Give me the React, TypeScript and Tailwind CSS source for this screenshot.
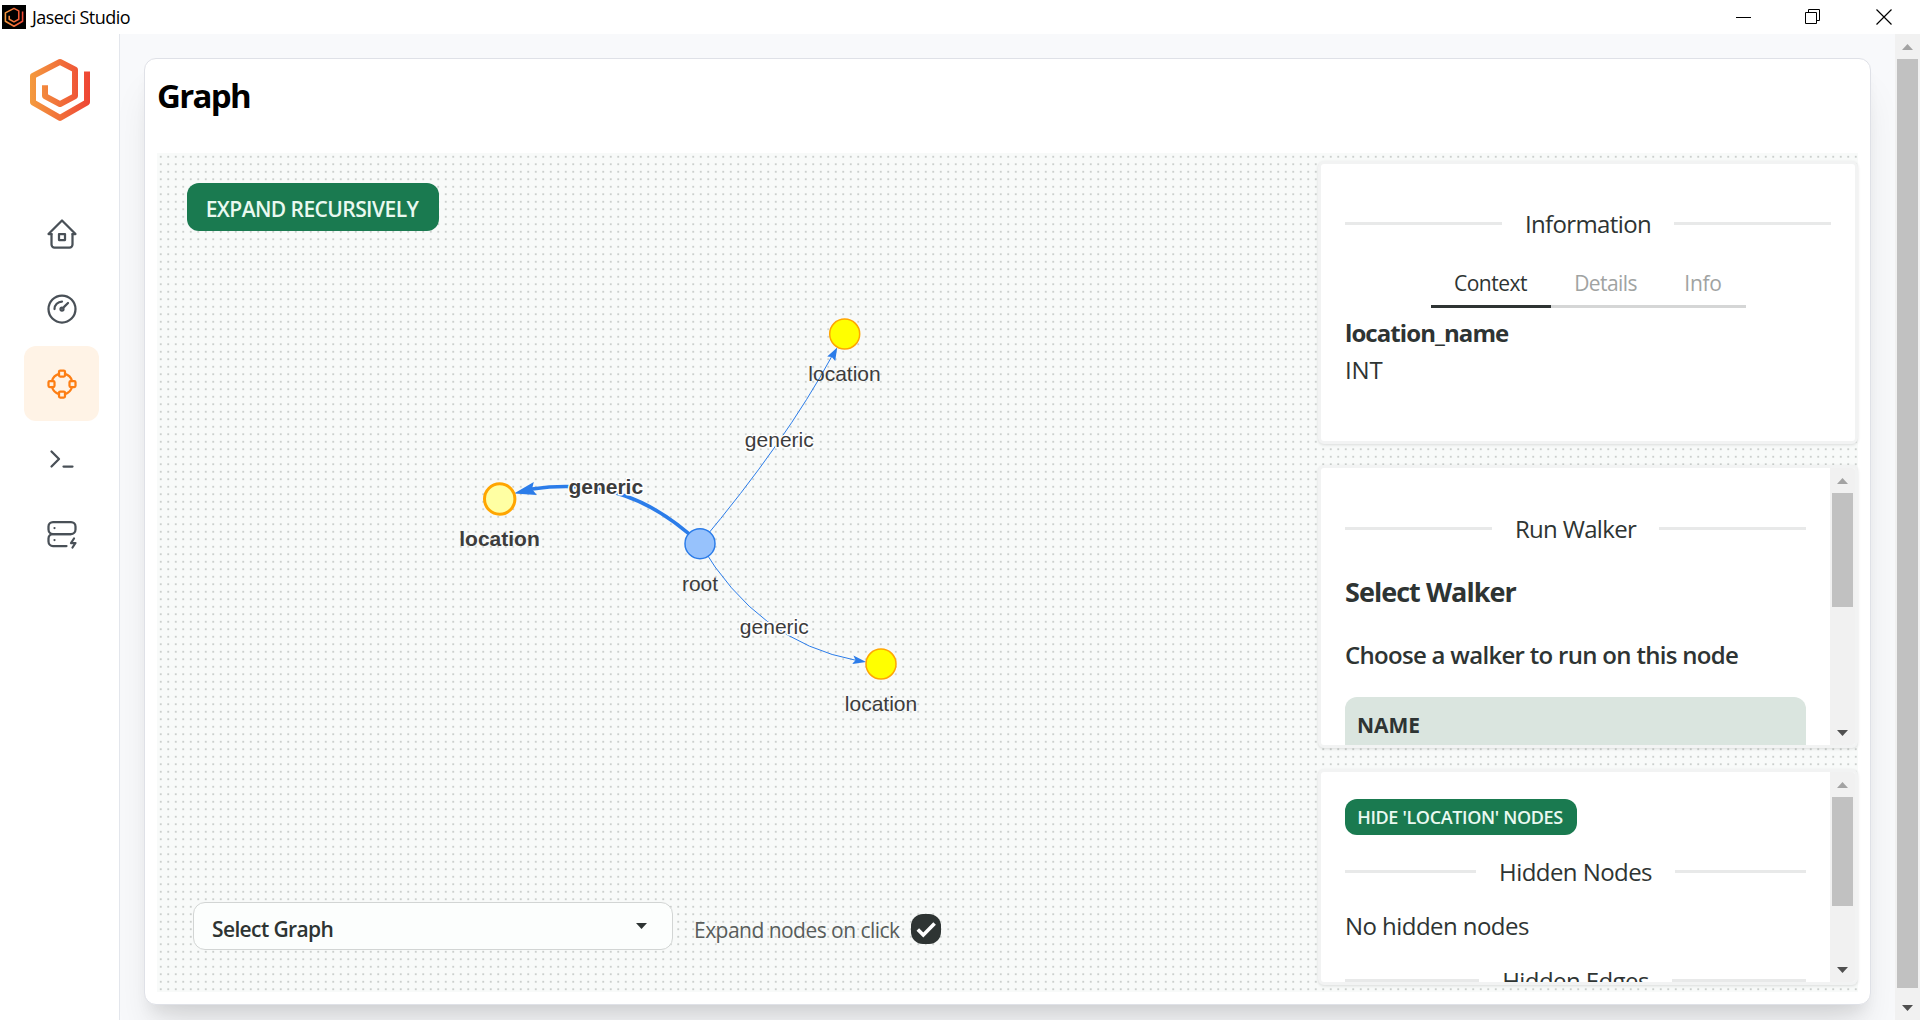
import type { ReactNode } from "react";

function Logo({ className, box, id, width }: { className: string; box: string; id: string; width: number }) {
  return (
    <svg className={className} viewBox={box} fill="none" aria-hidden="true">
      <defs>
        <linearGradient id={id} x1="30" y1="0" x2="90" y2="0" gradientUnits="userSpaceOnUse">
          <stop offset="0" stopColor="#f49b3e" />
          <stop offset="0.5" stopColor="#f1703a" />
          <stop offset="1" stopColor="#ee4434" />
        </linearGradient>
      </defs>
      <path
        d="M87 71V101.8L60 117.4L33 101.8V75.4L60 61.4L75 69.2V95.6L60 103.6L45 95.6V84.8"
        stroke={`url(#${id})`}
        strokeWidth={width}
        strokeLinejoin="round"
      />
    </svg>
  );
}

function Icon({ children }: { children: ReactNode }) {
  return (
    <svg
      className="size-9"
      viewBox="0 0 24 24"
      fill="none"
      stroke="currentColor"
      strokeWidth="1.5"
      strokeLinecap="round"
      strokeLinejoin="round"
      aria-hidden="true"
    >
      {children}
    </svg>
  );
}

function NavItem({ active = false, children }: { active?: boolean; children: ReactNode }) {
  return (
    <a
      className={
        active
          ? "flex size-[75px] items-center justify-center rounded-xl bg-[#fff3e6] text-[#fd7e14]"
          : "flex size-[75px] items-center justify-center rounded-xl text-[#495057]"
      }
    >
      {children}
    </a>
  );
}

function Sidebar() {
  return (
    <nav className="flex w-[120px] shrink-0 flex-col border-r border-[#e3e6ec] bg-white">
      <div className="flex h-[162px] justify-center pt-[23px]">
        <Logo className="h-[67px] w-[62px]" box="29 57 62 66" id="brand" width={6} />
      </div>
      <div className="flex flex-col pl-6">
        <NavItem>
          <Icon>
            <path d="M5 12H3l9-9 9 9h-2" />
            <path d="M5 12v7a2 2 0 0 0 2 2h10a2 2 0 0 0 2-2v-7" />
            <path d="M10 12h4v4h-4z" />
          </Icon>
        </NavItem>
        <NavItem>
          <Icon>
            <circle cx="12" cy="12" r="9" />
            <circle cx="12" cy="12" r="1" />
            <path d="M13.4 10.6L16 8M7 12a5 5 0 0 1 5-5" />
          </Icon>
        </NavItem>
        <NavItem active>
          <Icon>
            <rect x="10" y="3" width="4" height="4" rx="0.8" />
            <rect x="10" y="17" width="4" height="4" rx="0.8" />
            <rect x="3" y="10" width="4" height="4" rx="0.8" />
            <rect x="17" y="10" width="4" height="4" rx="0.8" />
            <path d="M5.3 10A7 7 0 0 1 10 5.3M14 5.3A7 7 0 0 1 18.7 10M18.7 14A7 7 0 0 1 14 18.7M10 18.7A7 7 0 0 1 5.3 14" />
          </Icon>
        </NavItem>
        <NavItem>
          <Icon>
            <path d="M5 7l5 5-5 5M13 17h6" />
          </Icon>
        </NavItem>
        <NavItem>
          <Icon>
            <path d="M3 7a3 3 0 0 1 3-3h12a3 3 0 0 1 3 3v2a3 3 0 0 1-3 3H6a3 3 0 0 1-3-3z" />
            <path d="M15 20H6a3 3 0 0 1-3-3v-2a3 3 0 0 1 3-3h12" />
            <path d="M7 8v.01M7 16v.01M20 15l-2 3h3l-2 3" />
          </Icon>
        </NavItem>
      </div>
    </nav>
  );
}

function TitleBar() {
  return (
    <header className="flex h-[34px] shrink-0 items-center justify-between bg-white pl-0.5">
      <div className="flex items-center gap-1.5">
        <span className="flex size-6 items-center justify-center bg-black">
          <Logo className="h-[21px] w-5" box="29 57 62 66" id="brand-small" width={5} />
        </span>
        <span className="text-lg/[34px] tracking-[-0.55px] text-black">Jaseci Studio</span>
      </div>
      <div className="flex items-center pr-7">
        <svg className="h-4 w-[69px]" viewBox="0 0 69 16" aria-hidden="true">
          <path d="M0 8.5h15" stroke="#000" />
        </svg>
        <svg className="h-4 w-[71px]" viewBox="0 0 71 16" fill="none" stroke="#000" aria-hidden="true">
          <path d="M.5 3.5h11v11H.5zM3.5 3.5v-3h11v11h-3" />
        </svg>
        <svg className="size-4" viewBox="0 0 16 16" stroke="#000" strokeWidth="1.2" aria-hidden="true">
          <path d="M.5 .5l15 15M15.5 .5l-15 15" />
        </svg>
      </div>
    </header>
  );
}

function Arrow({ down = false }: { down?: boolean }) {
  return (
    <svg className="h-[6px] w-[11px] shrink-0" viewBox="0 0 11 6" aria-hidden="true">
      {down ? <path d="M0 0h11L5.5 6z" fill="#505050" /> : <path d="M0 6h11L5.5 0z" fill="#a3a3a3" />}
    </svg>
  );
}

function Scrollbar({ thumb }: { thumb: string }) {
  return (
    <div className="flex w-[25px] shrink-0 flex-col bg-[#f1f1f1]">
      <div className="flex h-[25px] shrink-0 items-center justify-center">
        <Arrow />
      </div>
      <div className="flex-1 px-0.5">
        <div className={thumb} />
      </div>
      <div className="flex h-[25px] shrink-0 items-center justify-center">
        <Arrow down />
      </div>
    </div>
  );
}

function Divider({ children, className }: { children: ReactNode; className: string }) {
  return (
    <div className={`flex h-9 items-center gap-[23px] ${className}`}>
      <span className="h-[3px] flex-1 bg-[#e8e9e9]" />
      <span className="pt-0.5 text-2xl/9">{children}</span>
      <span className="h-[3px] flex-1 bg-[#e8e9e9]" />
    </div>
  );
}

function Panel({ className, children }: { className: string; children: ReactNode }) {
  return (
    <section
      className={`flex overflow-hidden rounded-md border-[3px] border-[#f2f3f3] bg-white text-[#2e3433] shadow-[0_1px_3px_rgba(0,0,0,0.12)] ${className}`}
    >
      {children}
    </section>
  );
}

function GraphView() {
  return (
    <svg
      className="absolute left-0 top-0 h-[839px] w-[1161px] font-['Liberation_Sans',Arial,sans-serif]"
      viewBox="157 153 1161 839"
      fontSize="21"
      textAnchor="middle"
      fill="#3c3c3c"
    >
      <g fill="none" stroke="#2b7ce9">
        <path d="M700 543.7C653 499.5 604 479 532 489" strokeWidth="3.6" />
        <path d="M700 543.7Q786 441 832 356" strokeWidth="1" />
        <path d="M700 543.7Q758 642 856 660.3" strokeWidth="1" />
      </g>
      <g fill="#2b7ce9">
        <path d="M514 493.6L533.8 482L532 489L536.8 495z" />
        <path d="M837.2 347.4L827.2 356.6L831.8 357L835.2 361z" />
        <path d="M866.2 662L853.4 655.6L855.6 660.2L852 664z" />
      </g>
      <circle cx="499.7" cy="499" r="15.2" fill="#ffffa3" stroke="#ffa500" strokeWidth="3" />
      <g strokeWidth="1.5">
        <circle cx="700" cy="543.7" r="15" fill="#97c2fc" stroke="#2b7ce9" />
        <circle cx="844.7" cy="334" r="15" fill="#ffff00" stroke="#ffa500" />
        <circle cx="881" cy="664" r="15" fill="#ffff00" stroke="#ffa500" />
      </g>
      <g stroke="#fff" strokeWidth="3" strokeLinejoin="round" paintOrder="stroke">
        <text x="605.8" y="494.3" fontWeight="700">generic</text>
        <text x="779.3" y="447">generic</text>
        <text x="774.3" y="634">generic</text>
      </g>
      <text x="499.5" y="546" fontWeight="700">location</text>
      <text x="700" y="591">root</text>
      <text x="844.5" y="381">location</text>
      <text x="881" y="711">location</text>
    </svg>
  );
}

export default function App() {
  return (
    <div className="flex h-[1020px] w-[1920px] flex-col overflow-hidden bg-[#f8f9fb] font-['Open_Sans','Noto_Sans',sans-serif]">
      <TitleBar />
      <div className="flex min-h-0 flex-1">
        <Sidebar />
        <main className="min-w-0 flex-1 overflow-hidden pl-6 pr-6 pt-6">
          <div className="h-[947px] rounded-xl border border-[#dfe1e7] bg-white p-3 shadow-[0_30px_38px_-8px_rgba(0,0,0,0.1),0_12px_15px_-6px_rgba(0,0,0,0.08)]">
            <h1 className="h-[82px] text-[33px]/[50px] font-bold tracking-[-1.7px] text-black">Graph</h1>
            <div className="flex h-[839px] bg-[#f8faf9] bg-[radial-gradient(circle,#cbcfcd_1.1px,transparent_1.4px)] bg-[size:7.5px_7.5px]">
              <div className="relative flex w-[1161px] flex-col justify-between">
                <GraphView />
                <button className="relative ml-[30px] mt-[30px] h-12 w-[252px] rounded-xl bg-[#1a7a50] pr-0.5 pt-1 text-[21px]/[44px] font-semibold tracking-[-0.57px] text-[#e9f9f0]">
                  EXPAND RECURSIVELY
                </button>
                <div className="relative mb-[42px] flex h-12 items-center pl-9">
                  <div className="flex h-12 w-[480px] items-center justify-between rounded-xl border border-[#d2d5d4] bg-[#fcfefd] pl-[18px] pr-[25px] text-[#2e3433]">
                    <span className="pt-1.5 text-[21px]/[38px] font-semibold tracking-[-0.63px]">Select Graph</span>
                    <svg className="h-[6px] w-[11px]" viewBox="0 0 11 6" aria-hidden="true">
                      <path d="M0 0h11L5.5 6z" fill="#2e3433" />
                    </svg>
                  </div>
                  <span className="ml-[21px] pt-2 text-[21px]/[38px] tracking-[-0.53px] text-[#585d5b]">
                    Expand nodes on click
                  </span>
                  <span className="ml-[11px] mt-1.5 flex size-[30px] items-center justify-center rounded-xl bg-[#2e3433]">
                    <svg className="size-[30px]" viewBox="0 0 30 30" fill="none" aria-hidden="true">
                      <path d="M6.8 15.4L12.3 21L23.6 9.4" stroke="#fff" strokeWidth="3.6" />
                    </svg>
                  </span>
                </div>
              </div>

              <aside className="flex w-[540px] flex-col gap-[21px] pt-2">
                <Panel className="h-[283px]">
                  <div className="flex-1 px-6 pt-[41px]">
                    <Divider className="tracking-[-0.63px]">Information</Divider>
                    <div className="mt-[19px] flex justify-center text-[21px] text-[#a0a3a2]">
                      <div className="h-12 w-[120px] border-b-[3px] border-[#2e3433] text-center leading-[46px] tracking-[-0.5px] text-[#2e3433]">
                        Context
                      </div>
                      <div className="h-12 w-[110px] border-b-[3px] border-[#d5d6d6] text-center leading-[46px] tracking-[-0.58px]">
                        Details
                      </div>
                      <div className="h-12 w-[85px] border-b-[3px] border-[#d5d6d6] text-center leading-[46px] tracking-[-0.27px]">
                        Info
                      </div>
                    </div>
                    <p className="mt-1.5 text-2xl/[37px] font-bold tracking-[-0.92px]">location_name</p>
                    <p className="text-2xl/[37px] tracking-[-0.14px]">INT</p>
                  </div>
                </Panel>

                <Panel className="h-[283px]">
                  <div className="flex-1 px-6 pt-[42px]">
                    <Divider className="tracking-[-0.68px]">Run Walker</Divider>
                    <h2 className="mt-[25px] text-[27px]/[42px] font-bold tracking-[-0.96px]">Select Walker</h2>
                    <h3 className="mt-6 text-2xl/9 font-semibold tracking-[-0.7px]">Choose a walker to run on this node</h3>
                    <div className="mt-6 h-14 rounded-t-xl bg-[#dae5df] pl-3 text-[21px]/[56px] font-bold">NAME</div>
                  </div>
                  <Scrollbar thumb="h-[114px] bg-[#c1c1c1]" />
                </Panel>

                <Panel className="h-[216px]">
                  <div className="flex-1 px-6 pt-[27px]">
                    <button className="block h-9 w-[232px] rounded-xl bg-[#1a7a50] pr-0.5 text-lg/9 font-semibold tracking-[-0.35px] text-[#e9f9f0]">
                      HIDE 'LOCATION' NODES
                    </button>
                    <Divider className="mt-[18px] tracking-[-0.57px]">Hidden Nodes</Divider>
                    <p className="mt-[19px] text-2xl/9 tracking-[-0.55px]">No hidden nodes</p>
                    <Divider className="mt-[18px] tracking-[-0.57px]">Hidden Edges</Divider>
                  </div>
                  <Scrollbar thumb="h-[109px] bg-[#c1c1c1]" />
                </Panel>
              </aside>
            </div>
          </div>
        </main>
        <Scrollbar thumb="h-[929px] bg-[#c1c1c1]" />
      </div>
    </div>
  );
}
